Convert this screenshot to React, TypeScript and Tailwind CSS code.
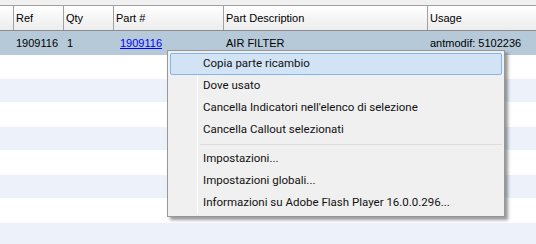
import React from 'react'

const stripes = [24, 23, 25, 23, 25, 23, 25, 24]

const items = [
  'Copia parte ricambio',
  'Dove usato',
  "Cancella Indicatori nell'elenco di selezione",
  'Cancella Callout selezionati',
]
const items2 = ['Impostazioni...', 'Impostazioni globali...', 'Informazioni su Adobe Flash Player 16.0.0.296...']

export default function App() {
  return (
    <div className="relative w-[536px] h-[244px] overflow-hidden bg-white font-['Liberation_Sans',Arial,sans-serif] text-[11px] text-black">
      <div className="h-[6px] bg-[#f0f0f0] border-b border-[#a0a0a0]" />
      {/* header */}
      <div className="flex h-[25px] bg-gradient-to-b from-white to-[#ececec] border-b border-[#8c8c8c]">
        <div className="w-[14px] border-r border-[#a0a0a0]" />
        <div className="w-[50px] border-r border-[#a0a0a0] pl-[2px] flex items-center">Ref</div>
        <div className="w-[50px] border-r border-[#a0a0a0] pl-[2px] flex items-center">Qty</div>
        <div className="w-[110px] border-r border-[#a0a0a0] pl-[2px] flex items-center">Part #</div>
        <div className="w-[204px] border-r border-[#a0a0a0] pl-[2px] flex items-center">Part Description</div>
        <div className="flex-1 pl-[2px] flex items-center">Usage</div>
      </div>
      {/* selected row */}
      <div className="flex h-[24px] bg-[#b5c9d8] items-center">
        <div className="w-[14px]" />
        <div className="w-[50px] pl-[2px]">1909116</div>
        <div className="w-[50px] pl-[3px]">1</div>
        <div className="w-[110px] pl-[6px]">
          <span className="text-[#0000ff] underline">1909116</span>
        </div>
        <div className="w-[204px] pl-[2px]">AIR FILTER</div>
        <div className="flex-1 pl-[2px]">antmodif: 5102236</div>
      </div>
      {stripes.map((h, i) => (
        <div
          key={i}
          className={i % 2 === 0 ? 'bg-white' : 'bg-[#edf2fa]'}
          style={{ height: h }}
        />
      ))}

      {/* context menu */}
      <div className="absolute left-[167px] top-[50px] w-[338px] h-[167px] bg-[#f0f0f0] border border-[#979797] shadow-[3px_3px_3px_rgba(0,0,0,0.4)] p-[2px] font-['Roboto','Liberation_Sans',sans-serif] text-[11.5px] text-[#111]">
        <div className="absolute left-[29px] top-[2px] bottom-[2px] w-px bg-[#e2e3e3] border-r border-white" />
        {items.map((t, i) => (
          <div
            key={t}
            className={
              'relative h-[22px] flex items-center pl-[32px] rounded-[2px] border ' +
              (i === 0 ? 'bg-[#d1e3f5] border-[#84b6ea]' : 'border-transparent')
            }
          >
            {t}
          </div>
        ))}
        <div className="relative h-[7px] flex items-center pl-[30px]">
          <div className="h-px w-full bg-[#dcdcdc]" />
        </div>
        {items2.map((t) => (
          <div key={t} className="relative h-[22px] flex items-center pl-[32px] border border-transparent">
            {t}
          </div>
        ))}
      </div>
    </div>
  )
}
